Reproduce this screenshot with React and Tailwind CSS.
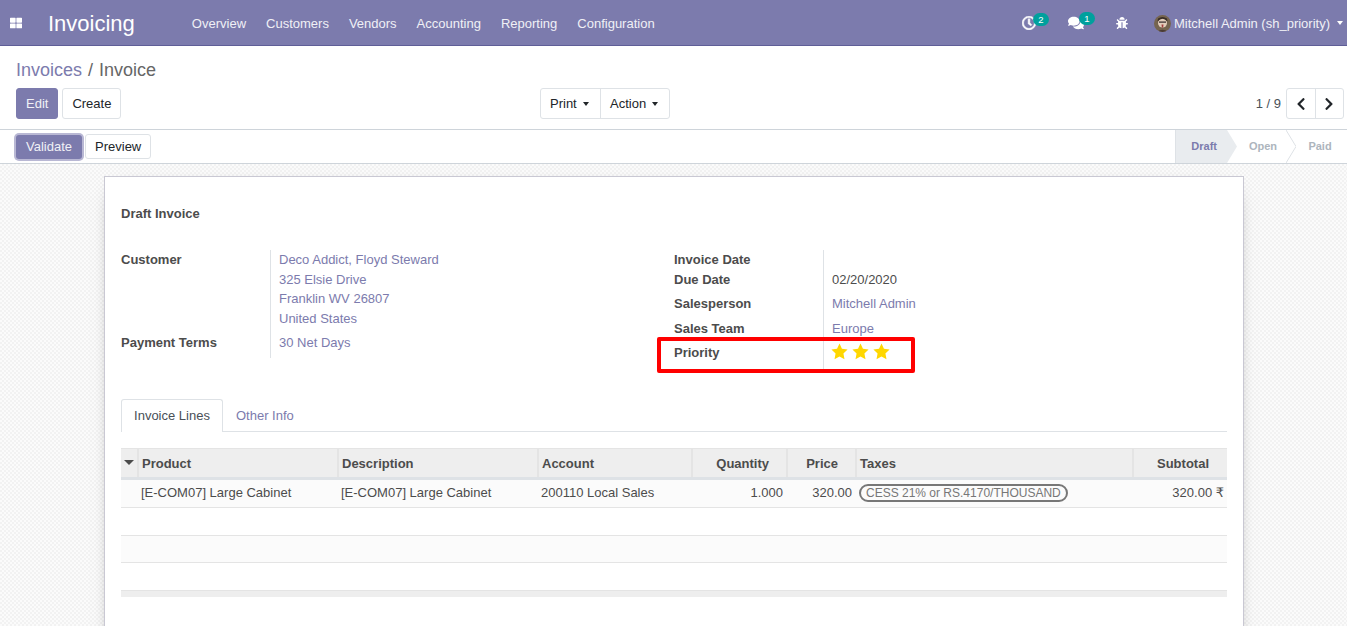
import { FaThLarge, FaRegClock, FaComments, FaBug, FaChevronLeft, FaChevronRight } from "react-icons/fa";

const menus = ["Overview", "Customers", "Vendors", "Accounting", "Reporting", "Configuration"];

function Caret({ className = "border-t-white" }) {
  return <span className={`inline-block w-0 h-0 border-x-[3px] border-x-transparent border-t-[4px] ${className}`} />;
}

function Badge({ children }) {
  return (
    <span className="absolute -top-[3px] left-[11px] h-[13px] min-w-[16px] rounded-full bg-[#00a09d] px-1 text-center text-[9.5px] leading-[13px] text-white">
      {children}
    </span>
  );
}

function Star() {
  return (
    <svg width="17" height="17" viewBox="0 0 16 16" className="block">
      <path d="M8 .5 10.3 5.4 15.6 6.1 11.7 9.8 12.7 15.2 8 12.6 3.3 15.2 4.3 9.8 .4 6.1 5.7 5.4Z" fill="#ffd700" />
    </svg>
  );
}

function Navbar() {
  return (
    <header className="h-[46px] shrink-0 bg-[#7c7bad] border-b border-[#5f5e97] pt-[3px] flex items-center text-white">
      <FaThLarge className="ml-[10px] -mt-[3px] text-[12px]" />
      <span className="ml-[26px] text-[22px] leading-none">Invoicing</span>
      <nav className="ml-[57px] flex gap-5 text-[13px] text-[#f0f0f6]">
        {menus.map((m) => (
          <span key={m}>{m}</span>
        ))}
      </nav>
      <div className="ml-auto flex items-center text-[13px] text-[#f0f0f6]">
        <span className="relative -mt-[2px] w-[28px]">
          <FaRegClock className="text-[14px] text-white stroke-white stroke-[24]" />
          <Badge>2</Badge>
        </span>
        <span className="relative -mt-[2px] ml-[18px] w-[28px]">
          <FaComments className="text-[16px] text-white" />
          <Badge>1</Badge>
        </span>
        <FaBug className="ml-[20px] -mt-[2px] text-[12px] text-white" />
        <svg className="ml-[26px] -mt-[2px] rounded-full" width="17" height="17" viewBox="0 0 17 17">
          <rect width="17" height="17" fill="#75644f" />
          <circle cx="8.5" cy="8" r="4.5" fill="#e3cdbb" />
          <path d="M3.5 6.5 Q8.5 1 13.5 6.5 L13 3.5 Q8.5 0.5 4 3.5Z" fill="#3a2f28" />
          <rect x="5" y="6.5" width="7" height="1.2" fill="#33292a" />
          <path d="M7.5 9.5h2l-.4 3h-1.2Z" fill="#a33d3d" />
          <path d="M3 17 Q8.5 12.5 14 17Z" fill="#4a3b34" />
        </svg>
        <span className="ml-[3px]">Mitchell Admin (sh_priority)</span>
        <Caret className="ml-[7px] mr-[4px] -mt-[2px] border-t-white" />
      </div>
    </header>
  );
}

function Button({ children, primary, className = "" }) {
  return (
    <button
      className={`h-[31px] rounded-[3px] border px-[9px] text-[13px] ${
        primary ? "bg-[#7c7bad] border-[#7c7bad] text-[#f0f0f6]" : "bg-white border-[#dee2e6] text-[#212529]"
      } ${className}`}
    >
      {children}
    </button>
  );
}

function ControlPanel() {
  return (
    <div className="h-[84px] shrink-0 bg-white border-b border-[#ced4da] pl-4 pr-[3px] pt-[13px]">
      <div className="text-[18px] leading-[22px] text-[#666]">
        <span className="text-[#7c7bad]">Invoices</span>
        <span className="mx-[6px]">/</span>
        <span>Invoice</span>
      </div>
      <div className="mt-[7px] flex items-center">
        <div className="w-[524px] flex gap-1">
          <Button primary>Edit</Button>
          <Button>Create</Button>
        </div>
        <div className="flex h-[31px] rounded-[3px] border border-[#dee2e6] text-[13px] text-[#212529]">
          <span className="flex w-[60px] items-center gap-[6px] border-r border-[#dee2e6] pl-[9px]">
            Print <Caret className="border-t-[#212529]" />
          </span>
          <span className="flex w-[68px] items-center gap-[6px] pl-[9px]">
            Action <Caret className="border-t-[#212529]" />
          </span>
        </div>
        <div className="ml-auto flex items-center text-[13px] text-[#495057]">
          <span className="mr-[5px]">1 / 9</span>
          <div className="flex h-[31px] w-[58px] rounded-[3px] border border-[#dee2e6] text-[#212529]">
            <span className="flex flex-1 items-center justify-center border-r border-[#dee2e6]">
              <FaChevronLeft className="text-[14px]" />
            </span>
            <span className="flex flex-1 items-center justify-center">
              <FaChevronRight className="text-[14px]" />
            </span>
          </div>
        </div>
      </div>
    </div>
  );
}

function StatusBar() {
  return (
    <div className="h-[34px] shrink-0 bg-white border-b border-[#ced4da] flex items-center pl-4">
      <button className="h-[24px] rounded-[3px] bg-[#7c7bad] px-[10px] text-[13px] text-[#f0f0f6] ring-2 ring-[#b9b8d4]">
        Validate
      </button>
      <button className="ml-[3px] h-[25px] rounded-[3px] border border-[#dee2e6] bg-white px-[9px] text-[13px] text-[#212529]">
        Preview
      </button>
      <div className="ml-auto flex h-full text-[11px] font-bold">
        <span className="flex w-[52px] items-center justify-end border-l border-[#dee2e6] bg-[#e9ecef] pr-[10px] text-[#7c7bad]">
          Draft
        </span>
        <svg width="10" height="33" viewBox="0 0 10 33" className="block">
          <path d="M0 0 L10 16.5 L0 33Z" fill="#e9ecef" />
        </svg>
        <span className="flex w-[49px] items-center justify-center pl-[3px] text-[#adb5bd]">Open</span>
        <svg width="10" height="33" viewBox="0 0 10 33" className="block">
          <path d="M0 0 L10 16.5 L0 33" fill="none" stroke="#dee2e6" />
        </svg>
        <span className="flex w-[51px] items-center justify-center pr-[3px] text-[#adb5bd]">Paid</span>
      </div>
    </div>
  );
}

function Field({ label, children, h }) {
  return (
    <div className={`flex ${h}`}>
      <div className="w-[149px] font-bold text-[#4c4c4c]">{label}</div>
      <div className="flex-1 border-l border-[#dee2e6] pl-2">{children}</div>
    </div>
  );
}

function Link({ children }) {
  return <span className="text-[#7c7bad]">{children}</span>;
}

function FormGroups() {
  return (
    <div className="mt-[27px] flex text-[13px] leading-[20px] text-[#4c4c4c]">
      <div className="w-[553px]">
        <Field label="Customer" h="h-[83px]">
          <div className="leading-[19.6px]">
            <Link>
              Deco Addict, Floyd Steward
              <br />
              325 Elsie Drive
              <br />
              Franklin WV 26807
              <br />
              United States
            </Link>
          </div>
        </Field>
        <Field label="Payment Terms" h="h-[25px]">
          <Link>30 Net Days</Link>
        </Field>
      </div>
      <div className="w-[402px]">
        <Field label="Invoice Date" h="h-[20px]"></Field>
        <Field label="Due Date" h="h-[24px]">
          <span>02/20/2020</span>
        </Field>
        <Field label="Salesperson" h="h-[25px]">
          <Link>Mitchell Admin</Link>
        </Field>
        <Field label="Sales Team" h="h-[24px]">
          <Link>Europe</Link>
        </Field>
        <Field label="Priority" h="h-[29px]">
          <div className="flex gap-1 -ml-px">
            <Star />
            <Star />
            <Star />
          </div>
        </Field>
      </div>
    </div>
  );
}

function Tabs() {
  return (
    <div className="mt-[27px] flex h-[33px] border-b border-[#dee2e6] text-[13px]">
      <span className="h-[33px] w-[102px] rounded-t-[3px] border border-b-0 border-[#dee2e6] bg-white pt-[6px] text-center text-[#495057]">
        Invoice Lines
      </span>
      <span className="ml-[13px] pt-[7px] text-[#7c7bad]">Other Info</span>
    </div>
  );
}

function InvoiceTable() {
  const th = "border-l-2 border-[#e4e4e4] px-[3px] pt-[1px] align-middle font-bold text-[#4c4c4c]";
  return (
    <table className="mt-4 w-[1106px] table-fixed border-collapse text-[13px] text-[#4c4c4c]">
      <colgroup>
        <col className="w-[17px]" />
        <col className="w-[200px]" />
        <col className="w-[200px]" />
        <col className="w-[154px]" />
        <col className="w-[95px]" />
        <col className="w-[69px]" />
        <col className="w-[277px]" />
        <col className="w-[94px]" />
      </colgroup>
      <thead>
        <tr className="h-[30px] border-t border-b-[3px] border-t-[#e4e4e4] border-b-[#dee2e6] bg-[#eeeeee]">
          <th className="pl-[3px] text-left align-middle">
            <Caret className="mb-[2px] border-x-[5px] border-t-[5px] border-t-[#4c4c4c]" />
          </th>
          <th className={`${th} text-left`}>Product</th>
          <th className={`${th} text-left`}>Description</th>
          <th className={`${th} text-left`}>Account</th>
          <th className={`${th} pr-[17px] text-right`}>Quantity</th>
          <th className={`${th} pr-[17px] text-right`}>Price</th>
          <th className={`${th} text-left`}>Taxes</th>
          <th className={`${th} pr-[18px] text-right`}>Subtotal</th>
        </tr>
      </thead>
      <tbody>
        <tr className="h-[29px] border-b border-[#e4e4e4] bg-[#fbfbfb]">
          <td />
          <td className="px-[3px] pb-[1px]">[E-COM07] Large Cabinet</td>
          <td className="px-[3px] pb-[1px]">[E-COM07] Large Cabinet</td>
          <td className="px-[3px] pb-[1px]">200110 Local Sales</td>
          <td className="pl-[3px] pr-[4px] pb-[1px] text-right">1.000</td>
          <td className="pl-[3px] pr-[4px] pb-[1px] text-right">320.00</td>
          <td className="px-[3px] pb-[1px]">
            <span className="inline-block h-[18px] w-[209px] whitespace-nowrap rounded-full border-2 border-[#777] pl-[5px] text-[12px] leading-[14px] text-[#777]">
              CESS 21% or RS.4170/THOUSAND
            </span>
          </td>
          <td className="px-[3px] pb-[1px] text-right whitespace-nowrap">
            320.00 <span className="font-['DejaVu_Sans',sans-serif]">₹</span>
          </td>
        </tr>
        <tr className="h-[28px] border-b border-[#e4e4e4]">
          <td colSpan={8} />
        </tr>
        <tr className="h-[27px] border-b border-[#e4e4e4] bg-[#fbfbfb]">
          <td colSpan={8} />
        </tr>
        <tr className="h-[28px] border-b border-[#e4e4e4]">
          <td colSpan={8} />
        </tr>
      </tbody>
      <tfoot>
        <tr className="h-[6px] bg-[#eeeeee]">
          <td colSpan={8} />
        </tr>
      </tfoot>
    </table>
  );
}

export default function App() {
  return (
    <div className="relative flex h-[626px] flex-col overflow-hidden font-['Liberation_Sans',Arial,sans-serif]">
      <Navbar />
      <ControlPanel />
      <StatusBar />
      <main className="flex-1 overflow-hidden bg-[#f9f9f9] bg-[repeating-conic-gradient(#f2f2f2_0_25%,#fbfbfb_0_50%)] bg-[length:4px_4px] pt-3">
        <div className="ml-[104px] h-[600px] w-[1140px] border border-[#c9c8d3] bg-white px-4 pt-7 shadow-[0_5px_20px_-15px_#000]">
          <h2 className="text-[13px] leading-[18px] font-bold text-[#4c4c4c]">Draft Invoice</h2>
          <FormGroups />
          <Tabs />
          <InvoiceTable />
        </div>
      </main>
      {/* annotation over the priority field */}
      <div className="absolute left-[657px] top-[337px] h-[36px] w-[258px] rounded-[2px] border-[4px] border-[#ff0000]" />
    </div>
  );
}
